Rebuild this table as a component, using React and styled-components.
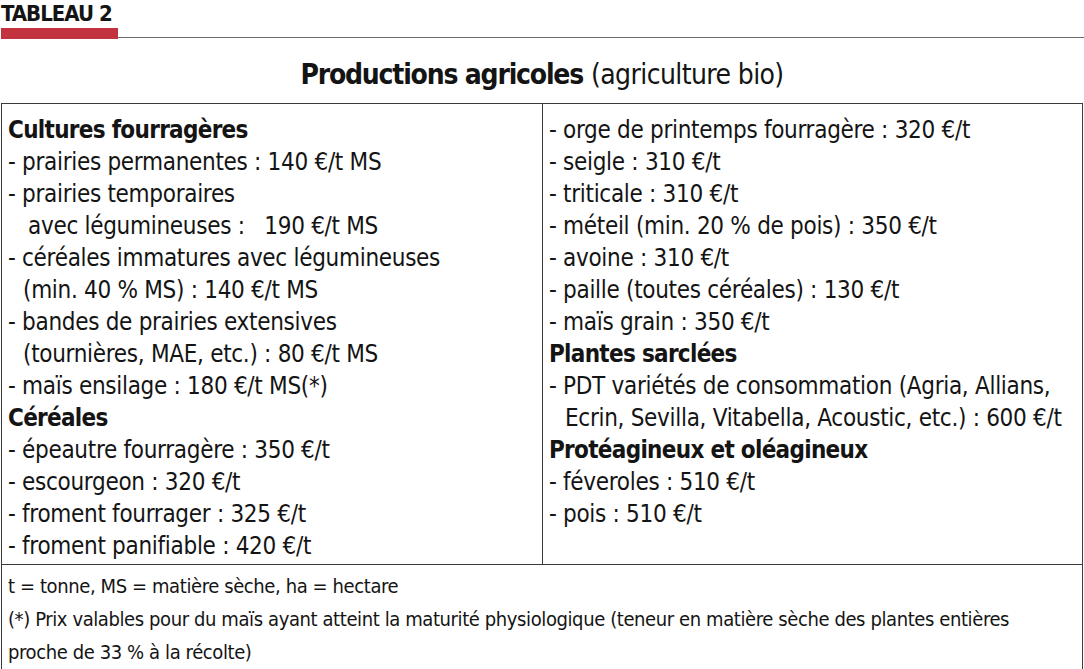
import styled, { createGlobalStyle } from 'styled-components';

const GlobalStyle = createGlobalStyle`
  html, body {
    margin: 0;
    padding: 0;
    background: #ffffff;
  }
  body {
    font-family: "Liberation Sans Narrow", "DejaVu Sans Condensed", "Roboto Condensed", Roboto, sans-serif;
    color: #141414;
  }
`;

const leftItems = [
  { type: 'head', text: 'Cultures fourragères' },
  { text: '- prairies permanentes : 140 €/t MS' },
  { text: '- prairies temporaires' },
  { text: 'avec légumineuses :   190 €/t MS', indent: 20 },
  { text: '- céréales immatures avec légumineuses' },
  { text: '(min. 40 % MS) : 140 €/t MS', indent: 15 },
  { text: '- bandes de prairies extensives' },
  { text: '(tournières, MAE, etc.) : 80 €/t MS', indent: 15 },
  { text: '- maïs ensilage : 180 €/t MS(*)' },
  { type: 'head', text: 'Céréales' },
  { text: '- épeautre fourragère : 350 €/t' },
  { text: '- escourgeon : 320 €/t' },
  { text: '- froment fourrager : 325 €/t' },
  { text: '- froment panifiable : 420 €/t' },
];

const rightItems = [
  { text: '- orge de printemps fourragère : 320 €/t' },
  { text: '- seigle : 310 €/t' },
  { text: '- triticale : 310 €/t' },
  { text: '- méteil (min. 20 % de pois) : 350 €/t' },
  { text: '- avoine : 310 €/t' },
  { text: '- paille (toutes céréales) : 130 €/t' },
  { text: '- maïs grain : 350 €/t' },
  { type: 'head', text: 'Plantes sarclées' },
  { text: '- PDT variétés de consommation (Agria, Allians,' },
  { text: 'Ecrin, Sevilla, Vitabella, Acoustic, etc.) : 600 €/t', indent: 16 },
  { type: 'head', text: 'Protéagineux et oléagineux' },
  { text: '- féveroles : 510 €/t' },
  { text: '- pois : 510 €/t' },
];

const Column = ({ items, divider }) => (
  <Cell $divider={divider}>
    {items.map((item, i) =>
      item.type === 'head' ? (
        <Heading key={i}>{item.text}</Heading>
      ) : (
        <Line key={i} $indent={item.indent || 0}>
          {item.text}
        </Line>
      )
    )}
  </Cell>
);

const App = () => {
  return (
    <Page>
      <GlobalStyle />
      <Kicker>TABLEAU 2</Kicker>
      <Rule>
        <RedBar />
        <GreyLine />
      </Rule>
      <Title>
        <strong>Productions agricoles</strong> <span>(agriculture bio)</span>
      </Title>
      <Table>
        <Column items={leftItems} divider />
        <Column items={rightItems} />
        <Footer>
          <Note>t = tonne, MS = matière sèche, ha = hectare</Note>
          <Note>
            (*) Prix valables pour du maïs ayant atteint la maturité physiologique (teneur en matière sèche des plantes entières
            <br />
            proche de 33 % à la récolte)
          </Note>
        </Footer>
      </Table>
    </Page>
  );
};

export default App;

const Page = styled.div`
  width: 1084px;
  height: 669px;
  overflow: hidden;
  display: flex;
  flex-direction: column;
`;

const Kicker = styled.div`
  font-size: 22px;
  font-weight: 700;
  line-height: 28px;
  height: 28px;
  padding-left: 1px;
  letter-spacing: -1px;
`;

const Rule = styled.div`
  display: flex;
  align-items: flex-end;
  height: 11px;
`;

const RedBar = styled.div`
  width: 117px;
  height: 11px;
  margin-left: 1px;
  background-color: #c3323f;
`;

const GreyLine = styled.div`
  flex: 1;
  height: 1px;
  margin-bottom: 1px;
  background-color: #6b6b6b;
`;

const Title = styled.div`
  text-align: center;
  font-size: 28px;
  line-height: 40px;
  padding-top: 16px;
  height: 69px;
  box-sizing: border-box;

  strong {
    font-weight: 700;
    letter-spacing: -1.2px;
  }

  span {
    letter-spacing: -0.6px;
  }
`;

const Table = styled.div`
  display: grid;
  grid-template-columns: 541px 1fr;
  margin: 0 1px;
  border: 1.5px solid #3a3a3a;
  border-bottom: none;
  flex: 1;
`;

const Cell = styled.div`
  padding: 10px 6px 4px;
  border-right: ${(p) => (p.$divider ? '1.5px solid #3a3a3a' : 'none')};
  height: 460px;
  box-sizing: border-box;
`;

const Heading = styled.div`
  font-size: 24px;
  line-height: 32px;
  font-weight: 700;
  letter-spacing: -0.7px;
  white-space: nowrap;
`;

const Line = styled.div`
  font-size: 24px;
  line-height: 32px;
  letter-spacing: -0.3px;
  white-space: pre;
  padding-left: ${(p) => p.$indent}px;
`;

const Footer = styled.div`
  grid-column: 1 / span 2;
  border-top: 1.5px solid #3a3a3a;
  padding: 5px 6px 0;
`;

const Note = styled.div`
  font-size: 20px;
  line-height: 33px;
  letter-spacing: -0.4px;
`;
